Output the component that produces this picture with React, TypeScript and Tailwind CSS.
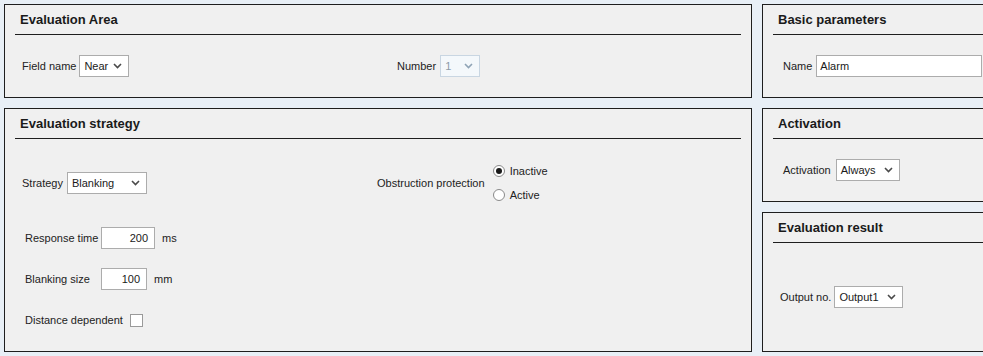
import React from 'react';

const font = { fontFamily: '"Liberation Sans", Arial, sans-serif' };

function Chevron({ muted }: { muted?: boolean }) {
  return (
    <svg width="9" height="6" viewBox="0 0 9 6" className="shrink-0">
      <path d="M1 1 L4.5 4.5 L8 1" fill="none" stroke={muted ? '#8fa3b5' : '#4a4a4a'} strokeWidth="1.6" />
    </svg>
  );
}

function Select({ value, width, disabled }: { value: string; width: string; disabled?: boolean }) {
  return (
    <div
      className={`${width} h-[22px] flex items-center justify-between pl-[4px] pr-[6px] border ${
        disabled ? 'bg-[#f4f8fb] border-[#c9d6e2] text-[#8c9aa8]' : 'bg-white border-[#acacac] text-[#1a1a1a]'
      }`}
    >
      <span>{value}</span>
      <Chevron muted={disabled} />
    </div>
  );
}

function TextBox({ value, width, right }: { value: string; width: string; right?: boolean }) {
  return (
    <div
      className={`${width} h-[22px] flex items-center bg-white border border-[#acacac] text-[#1a1a1a] ${
        right ? 'justify-end pr-[6px]' : 'pl-[3px]'
      }`}
    >
      {value}
    </div>
  );
}

function Radio({ checked, label }: { checked?: boolean; label: string }) {
  return (
    <div className="h-[24px] flex items-center gap-[5px]">
      <div className="w-[12px] h-[12px] rounded-full border border-[#8a8a8a] bg-white flex items-center justify-center">
        {checked && <div className="w-[6px] h-[6px] rounded-full bg-[#1a1a1a]" />}
      </div>
      <span>{label}</span>
    </div>
  );
}

function Panel({ title, className, children }: { title: string; className: string; children: React.ReactNode }) {
  return (
    <div className={`flex flex-col border border-[#1e1e1e] bg-[#f0f0f0] ${className}`}>
      <div className="mx-[10px] h-[30px] shrink-0 border-b border-[#1e1e1e] pl-[5px] flex items-center text-[13px] font-bold text-[#1a1a1a]">
        {title}
      </div>
      {children}
    </div>
  );
}

export default function App() {
  return (
    <div style={font} className="w-[983px] h-[356px] overflow-hidden bg-[#e8eff6] flex gap-[10px] p-[4px] text-[11px] text-[#222]">
      {/* Left column */}
      <div className="w-[748px] shrink-0 flex flex-col gap-[10px]">
        <Panel title="Evaluation Area" className="h-[94px]">
          <div className="flex-1 flex items-center pl-[17px]">
            <div className="w-[375px] flex items-center gap-[3px]">
              <span>Field name</span>
              <Select value="Near" width="w-[50px]" />
            </div>
            <div className="flex items-center gap-[4px]">
              <span>Number</span>
              <Select value="1" width="w-[40px]" disabled />
            </div>
          </div>
        </Panel>

        <Panel title="Evaluation strategy" className="h-[244px]">
          <div className="flex flex-col pl-[17px]">
            <div className="mt-[20px] flex items-center">
              <div className="w-[355px] flex items-center gap-[4px]">
                <span>Strategy</span>
                <Select value="Blanking" width="w-[80px]" />
              </div>
              <span className="mr-[8px]">Obstruction protection</span>
              <div className="flex flex-col">
                <Radio checked label="Inactive" />
                <Radio label="Active" />
              </div>
            </div>

            <div className="mt-[20px] ml-[3px] flex items-center">
              <span className="w-[76px]">Response time</span>
              <TextBox value="200" width="w-[54px]" right />
              <span className="ml-[7px]">ms</span>
            </div>

            <div className="mt-[19px] ml-[3px] flex items-center">
              <span className="w-[76px]">Blanking size</span>
              <TextBox value="100" width="w-[46px]" right />
              <span className="ml-[7px]">mm</span>
            </div>

            <div className="mt-[19px] ml-[3px] h-[22px] flex items-center">
              <span className="w-[105px]">Distance dependent</span>
              <div className="w-[13px] h-[13px] bg-white border border-[#9a9a9a]" />
            </div>
          </div>
        </Panel>
      </div>

      {/* Right column */}
      <div className="w-[240px] shrink-0 flex flex-col gap-[10px]">
        <Panel title="Basic parameters" className="h-[94px]">
          <div className="flex-1 flex items-center pl-[20px] gap-[4px]">
            <span>Name</span>
            <TextBox value="Alarm" width="w-[166px]" />
          </div>
        </Panel>

        <Panel title="Activation" className="h-[94px]">
          <div className="flex-1 flex items-center pl-[20px] gap-[5px]">
            <span>Activation</span>
            <Select value="Always" width="w-[64px]" />
          </div>
        </Panel>

        <Panel title="Evaluation result" className="h-[140px]">
          <div className="flex-1 flex items-center pl-[17px] gap-[3px]">
            <span>Output no.</span>
            <Select value="Output1" width="w-[69px]" />
          </div>
        </Panel>
      </div>
    </div>
  );
}
